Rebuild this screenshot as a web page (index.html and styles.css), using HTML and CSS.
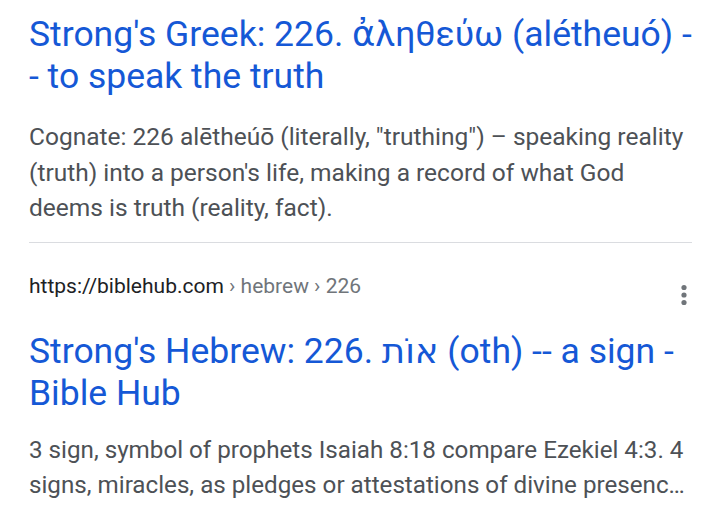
FILE: index.html
```html
<!DOCTYPE html>
<html>
<head>
<meta charset="utf-8">
<link rel="stylesheet" href="styles.css">
</head>
<body>
<div class="page">
  <div class="result">
    <a class="title">Strong's Greek: 226. ἀληθεύω (alétheuó) -&#8203;- to speak the truth</a>
    <p class="snippet">Cognate: 226 alētheúō (literally, "truthing") – speaking reality (truth) into a person's life, making a record of what God deems is truth (reality, fact).</p>
  </div>
  <div class="divider"></div>
  <div class="result second">
    <div class="urlrow">
      <div class="url">https://biblehub.com<span class="crumb"> › hebrew › 226</span></div>
      <svg class="dots" width="8" height="22" viewBox="0 0 8 22"><circle cx="4" cy="3.5" r="2.6" fill="#70757a"/><circle cx="4" cy="11" r="2.6" fill="#70757a"/><circle cx="4" cy="18.5" r="2.6" fill="#70757a"/></svg>
    </div>
    <a class="title">Strong's Hebrew: 226. <span dir="rtl">אוֹת</span> (oth) -- a sign - Bible Hub</a>
    <p class="snippet">3 sign, symbol of prophets Isaiah 8:18 compare Ezekiel 4:3. 4 signs, miracles, as pledges or attestations of divine presenc…</p>
  </div>
</div>
</body>
</html>
```
FILE: styles.css
```css
html, body { margin: 0; padding: 0; background: #fff; }
.page { padding: 0 28px 0 29px; font-family: Roboto, "Noto Sans", sans-serif; }
.result { display: flex; flex-direction: column; }
.title {
  display: block;
  color: #1558d6;
  font-family: Roboto, "DejaVu Sans", sans-serif;
  font-size: 35.5px;
  line-height: 42px;
  margin-top: 13px;
}
.snippet {
  color: #4d5156;
  font-size: 24.5px;
  line-height: 35.5px;
  margin: 22px 0 0 0;
}
.divider { height: 1px; background: #dadce0; margin-top: 16px; }
.urlrow { display: flex; justify-content: space-between; align-items: flex-start; margin-top: 29px; }
.url { color: #202124; font-size: 21px; line-height: 28px; }
.crumb { color: #70757a; }
.dots { margin-right: 4px; margin-top: 12px; }
.second .title { margin-top: 24px; }
.second .snippet { margin-top: 19px; font-size: 24.2px; margin-right: -4px; }
```
